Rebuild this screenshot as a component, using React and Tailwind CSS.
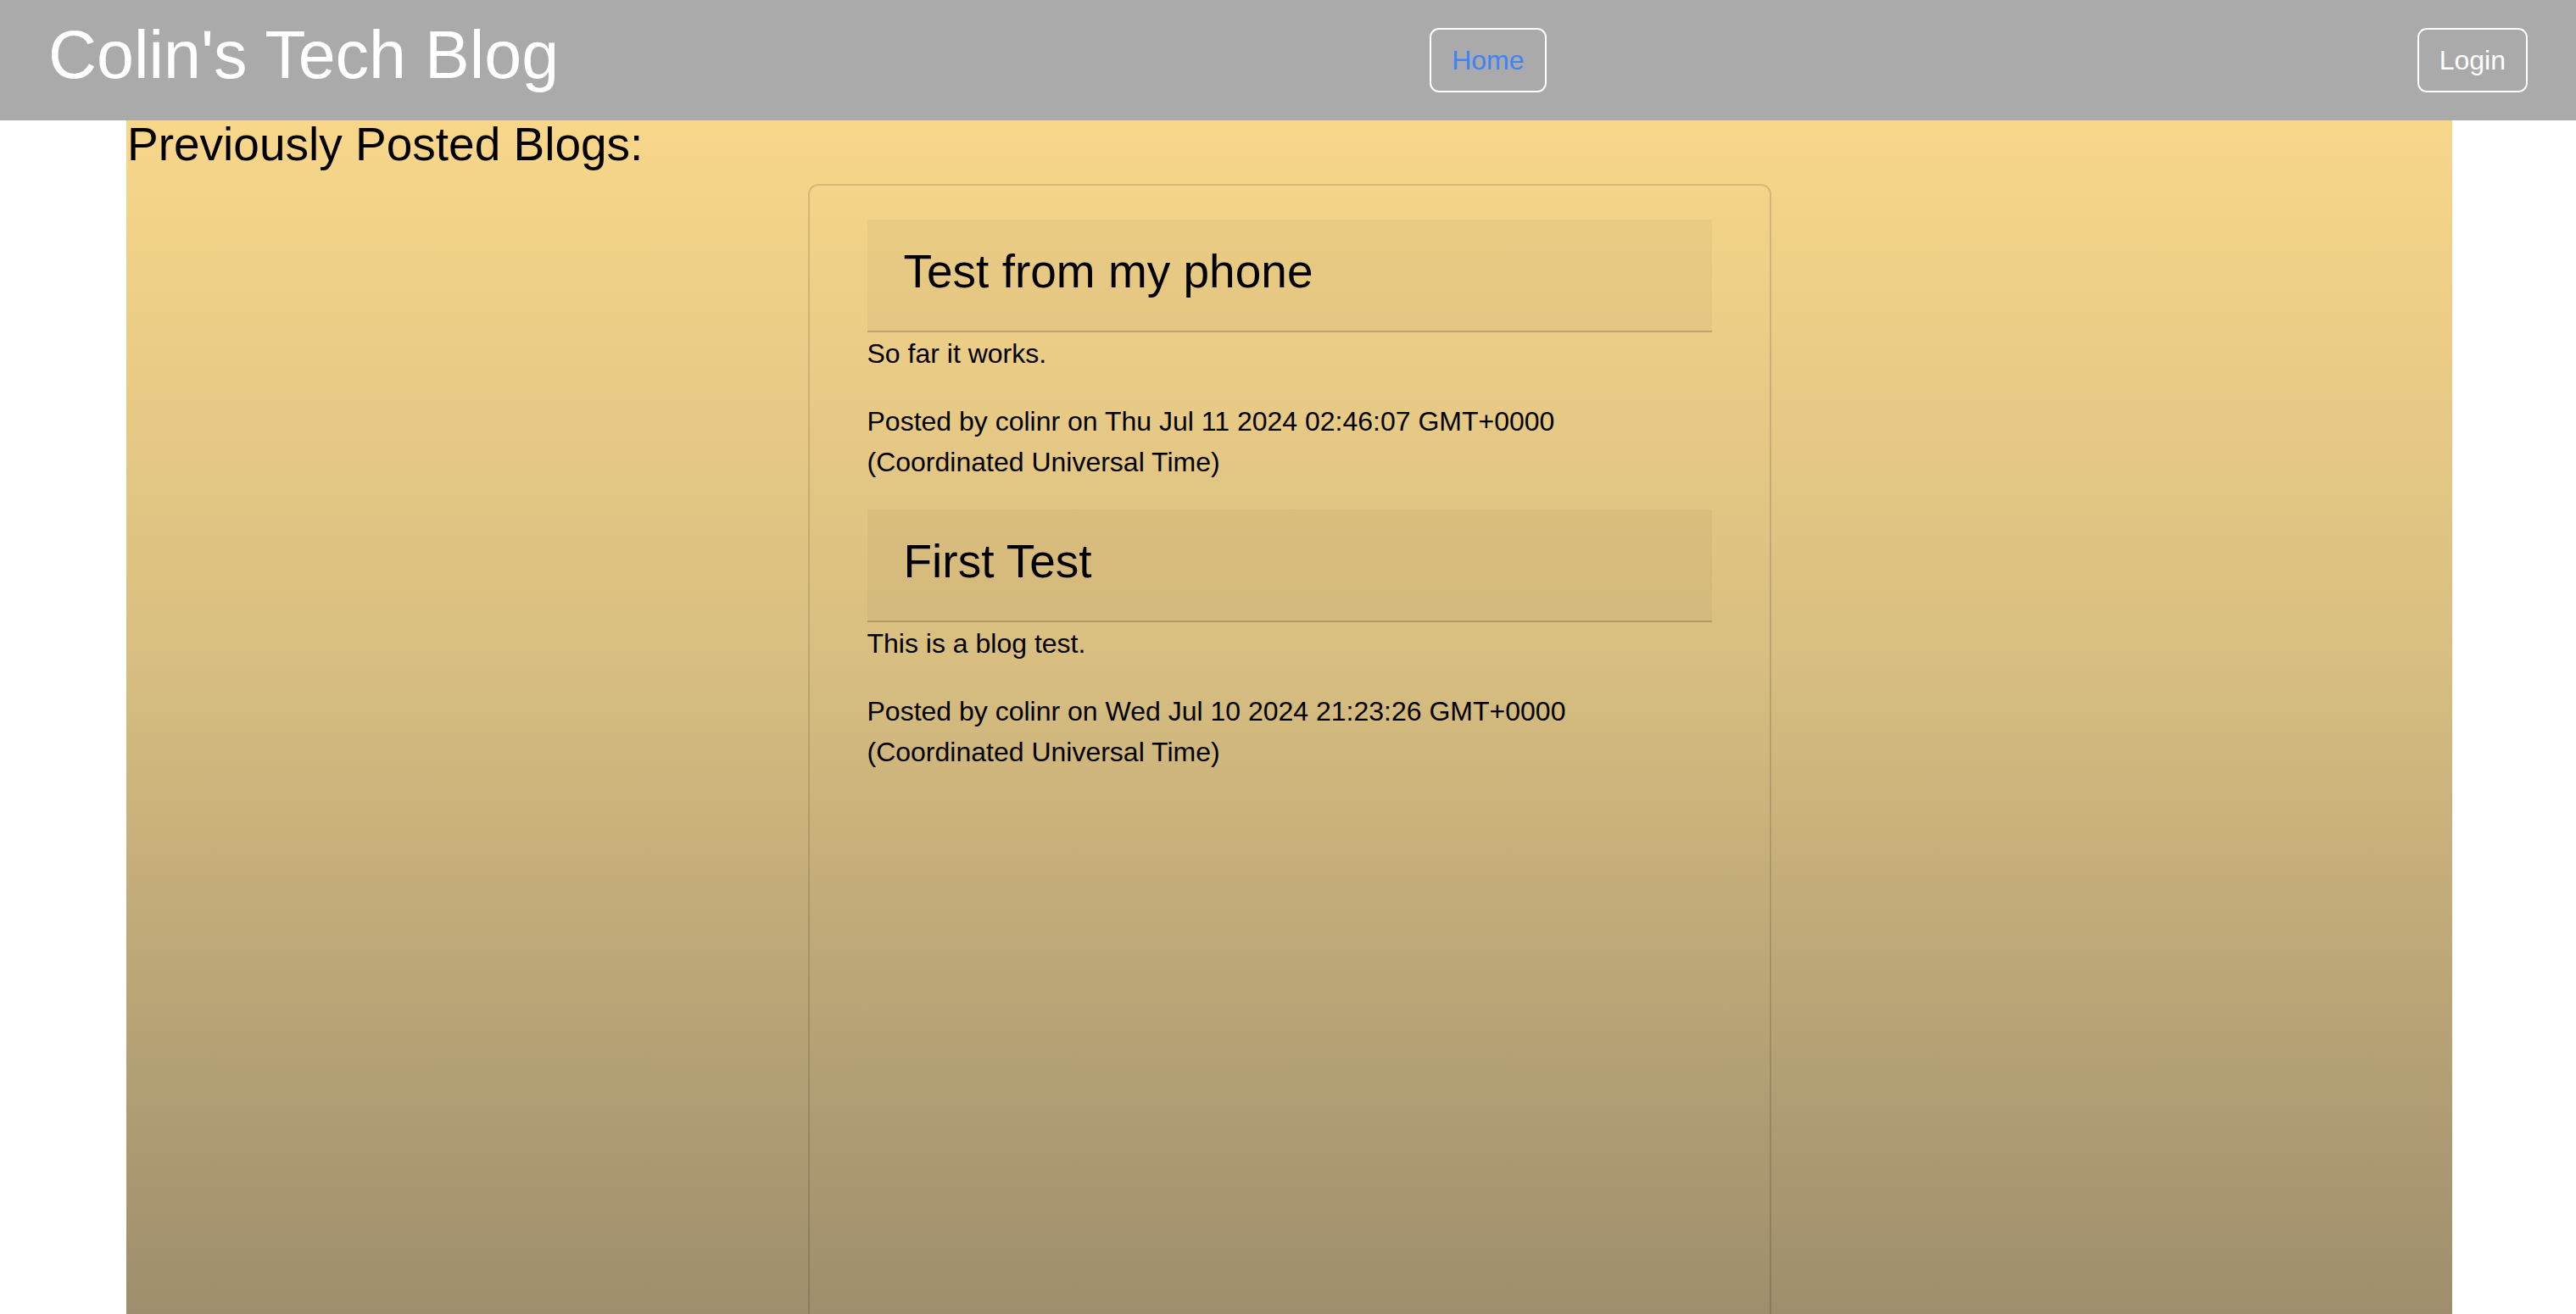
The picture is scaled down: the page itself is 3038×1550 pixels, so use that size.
import React from 'react';

const posts = [
  {
    title: 'Test from my phone',
    body: 'So far it works.',
    author: 'colinr',
    date: 'Thu Jul 11 2024 02:46:07 GMT+0000',
  },
  {
    title: 'First Test',
    body: 'This is a blog test.',
    author: 'colinr',
    date: 'Wed Jul 10 2024 21:23:26 GMT+0000',
  },
];

// Header bar with title and nav buttons
const NavBar = () => (
  <header className="h-[142px] shrink-0 bg-[#aaaaaa] px-[57px] flex items-center justify-between">
    <h1 className="text-[79px] leading-[96px] mb-[12px] text-white">Colin's Tech Blog</h1>
    <a className="px-[24px] py-[12px] border-2 border-white rounded-[11px] text-[32px] leading-[48px] text-[#3d84f5]">
      Home
    </a>
    <a className="px-[24px] py-[12px] border-2 border-white rounded-[11px] text-[32px] leading-[48px] text-white">
      Login
    </a>
  </header>
);

const Post = ({ post }) => (
  <div className="mb-[32px]">
    <div className="bg-black/[0.03] border-b-2 border-black/[0.17] pt-[28px] pb-[37px] pl-[43px]">
      <h3 className="text-[55px] leading-[66px] text-black">{post.title}</h3>
    </div>
    <p className="text-[32px] leading-[48px] mb-[32px] mt-[1px]">{post.body}</p>
    <p className="text-[32px] leading-[48px]">
      <span className="block">Posted by {post.author} on {post.date}</span>
      <span className="block">(Coordinated Universal Time)</span>
    </p>
  </div>
);

export default function App() {
  return (
    <div
      className="h-[1550px] overflow-hidden bg-white flex flex-col text-black"
      style={{ fontFamily: '"Liberation Sans", Arial, sans-serif' }}
    >
      <NavBar />
      <main className="h-[1408px] shrink-0 ml-[149px] mr-[146px] bg-gradient-to-b from-[#f8d78b] via-[#d8be80] via-45% to-[#9e8e6d]">
        <h3 className="text-[55px] leading-[62px] -mb-[6px] -translate-y-[3px] pl-[1px]">Previously Posted Blogs:</h3>
        <div className="mt-[19px] mx-auto w-[1136px] min-h-[1500px] border-2 border-black/[0.13] rounded-[12px] pt-[40px] px-[68px]">
          {posts.map((p) => (
            <Post key={p.title} post={p} />
          ))}
        </div>
      </main>
    </div>
  );
}
